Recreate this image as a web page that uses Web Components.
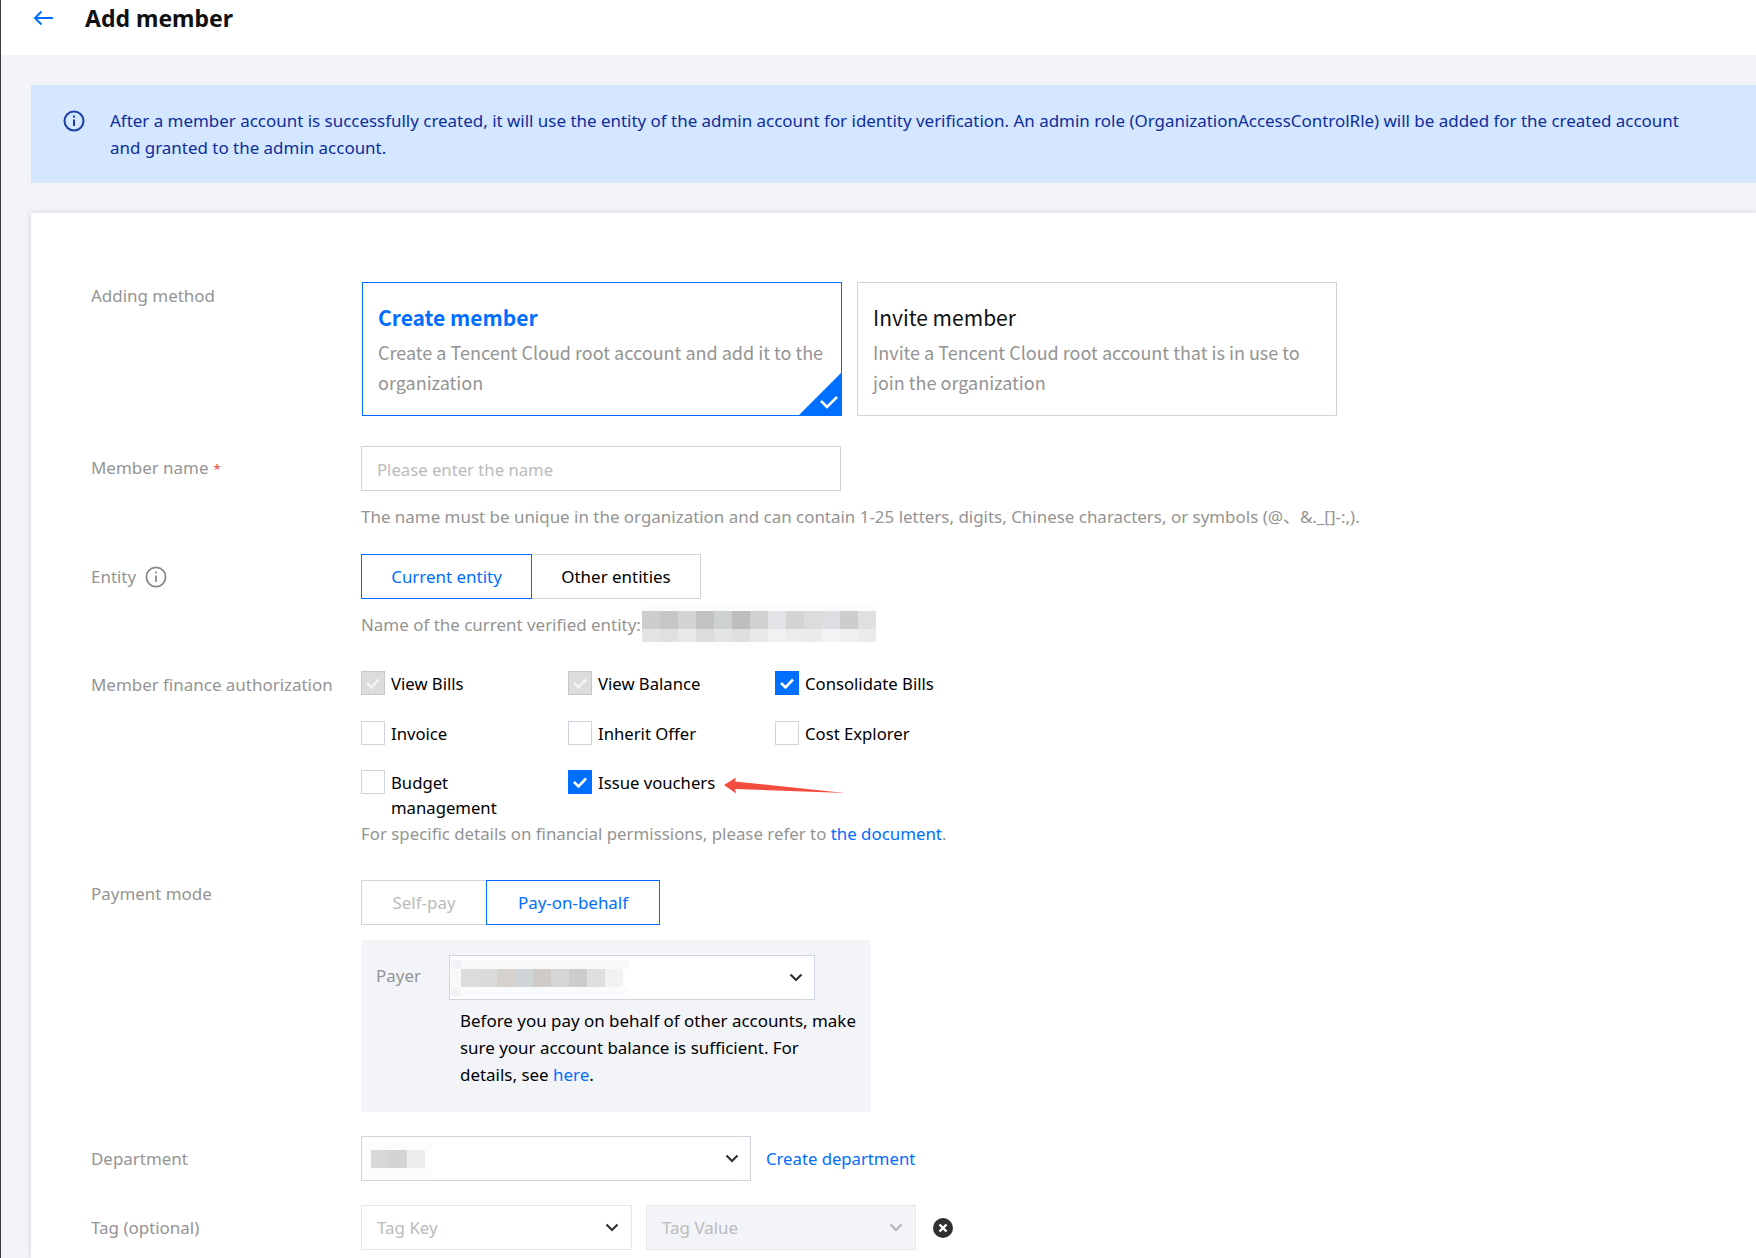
<!DOCTYPE html>
<html lang="en">
<head>
<meta charset="utf-8">
<title>Add member</title>
<style>
  html, body { margin: 0; padding: 0; }
  body {
    width: 1756px;
    height: 1258px;
    overflow: hidden;
    background: #f2f4f8;
    font-family: "Noto Sans", "Noto Sans CJK SC", sans-serif;
    font-size: 16.95px;
    color: #000;
  }
  a { color: #006eff; text-decoration: none; }
  .hint { color: #949494; line-height: 27px; white-space: nowrap; }
  .hint-name { margin-top: 12px; }
  .hint-entity { display: flex; align-items: center; margin-top: 9px; height: 32px; }
  .hint-entity mosaic-block { margin-left: 1px; }
  .hint-fin { font-size: 16.85px; }
  .checks { display: grid; grid-template-columns: repeat(3, 207px); width: 621px; row-gap: 25px; margin-top: 1px; font-size: 16.7px; }
  .checks .last { margin-top: -1px; }
  .payer-box { width: 510px; height: 172px; box-sizing: border-box; padding: 15px; margin-top: 15px; background: #f2f4f8; }
  .payer-line { display: flex; }
  .payer-line span { width: 73px; line-height: 42px; color: #949494; }
  .payer-note { width: 399px; margin: 7px 0 0 84px; line-height: 27px; }
  .inline { display: flex; align-items: center; }
  .tag-value { margin-left: 14px; }
  .tag-del { margin-left: 17px; }
  .dept-link { margin-left: 15px; font-size: 16.7px; }
  .req { margin-left: 5px; font-size: 13px; color: #e54545; }
</style>
</head>
<body>

<template id="t-page">
  <style>
    :host { display: block; position: relative; height: 1258px; border-left: 1px solid #3c3c3c; box-sizing: border-box; }
    header { display: flex; align-items: center; height: 55px; padding-bottom: 19px; box-sizing: border-box; padding-left: 32px; background: #fff; }
    h1 { margin: 0 0 0 32px; font-size: 23px; line-height: 36px; font-weight: 700; color: #111; }
    main { padding: 30px 0 0 30px; }
    .panel { margin-top: 30px; padding: 69px 0 0 60px; height: 1045px; box-sizing: border-box; background: #fff; box-shadow: 0 0 6px rgba(54, 58, 80, .16); }
    .red-arrow { position: absolute; left: 722px; top: 777px; }
  </style>
  <header>
    <svg width="20" height="16" viewBox="0 0 20 16" fill="none" stroke="#006eff" stroke-width="2"><path d="M20 8H2M8.5 1.5 2 8l6.5 6.5"/></svg>
    <h1><slot name="title"></slot></h1>
  </header>
  <main>
    <slot name="alert"></slot>
    <div class="panel"><slot></slot></div>
  </main>
  <svg class="red-arrow" width="124" height="18" viewBox="0 0 124 18"><path fill="#f44d3f" d="M1 8 13 .5 12 4.5 122 16 12 12 13 16.5Z"/></svg>
</template>

<template id="t-alert">
  <style>
    :host { display: flex; height: 98px; box-sizing: border-box; padding: 22px 52px 0 32px; background: #d5e6ff; color: #0d2e9c; line-height: 27px; }
    svg { flex: none; margin: 3px 25px 0 0; }
    div { flex: 1; }
  </style>
  <svg width="22" height="22" viewBox="0 0 22 22" fill="none" stroke="#1c3fa6" stroke-width="2"><circle cx="11" cy="11" r="9.5"/><path d="M11 9.5V16M11 5.5v2"/></svg>
  <div><slot></slot></div>
</template>

<template id="t-row">
  <style>
    :host { display: grid; grid-template-columns: 270px 1fr; }
    .label { display: flex; align-items: flex-start; color: #949494; line-height: 27px; padding-top: var(--label-top, 9px); }
    .field { min-width: 0; }
  </style>
  <div class="label"><slot name="label"></slot></div>
  <div class="field"><slot></slot></div>
</template>

<template id="t-method">
  <style>
    :host { display: block; position: relative; width: 480px; height: 134px; box-sizing: border-box; padding: 18px 15px 0; background: #fff; border: 1px solid #cfd5de; }
    :host([selected]) { border-color: #006eff; }
    .name { font-family: "Noto Sans CJK SC", "Noto Sans", sans-serif; font-size: 21px; line-height: 32px; color: #111; }
    :host([selected]) .name { color: #006eff; font-weight: 700; }
    .desc { margin-top: 4px; font-family: "Noto Sans CJK SC", "Noto Sans", sans-serif; font-size: 18px; line-height: 30px; color: #949494; }
    svg { display: none; position: absolute; right: -1px; bottom: -1px; }
    :host([selected]) svg { display: block; }
  </style>
  <div class="name"><slot name="name"></slot></div>
  <div class="desc"><slot></slot></div>
  <svg width="44" height="44" viewBox="0 0 44 44"><path fill="#006eff" d="M44 0V44H0Z"/><path fill="none" stroke="#fff" stroke-width="2.6" d="M23 29l6 6 10-10"/></svg>
</template>

<template id="t-input">
  <style>
    :host { display: block; width: 480px; height: 45px; box-sizing: border-box; padding: 0 15px; border: 1px solid #cfd5de; background: #fff; color: #bbb; font-size: 16.7px; line-height: 45px; }
  </style>
  <slot></slot>
</template>

<template id="t-seg-group">
  <style>:host { display: flex; }</style>
  <slot></slot>
</template>

<template id="t-seg">
  <style>
    :host { display: block; position: relative; height: 45px; box-sizing: border-box; margin-right: -1px; border: 1px solid #cfd5de; background: #fff; text-align: center; line-height: 44px; color: #000; }
    :host([selected]) { z-index: 1; border-color: #006eff; color: #006eff; }
    :host([disabled]) { color: #bbb; }
  </style>
  <slot></slot>
</template>

<template id="t-check">
  <style>
    :host { display: flex; align-items: flex-start; line-height: 25px; }
    .box { flex: none; width: 24px; height: 24px; box-sizing: border-box; margin-right: 6px; background: #fff; border: 1px solid #cfd5de; }
    .box svg { display: none; }
    :host([checked]) .box { background: #006eff; border-color: #006eff; }
    :host([checked]) .box svg, :host([locked]) .box svg { display: block; }
    :host([locked]) .box { background: #dcdcdc; border-color: #c8c8c8; }
    :host([locked]) path { stroke: #f4f4f4; }
    .txt { max-width: 140px; }
  </style>
  <div class="box"><svg width="22" height="22" viewBox="0 0 22 22" fill="none"><path stroke="#fff" stroke-width="2.6" d="M5 11l4.5 4.5L17 7.5"/></svg></div>
  <div class="txt"><slot></slot></div>
</template>

<template id="t-select">
  <style>
    :host { display: flex; align-items: center; height: 45px; box-sizing: border-box; padding: 0 11px 0 15px; background: #fff; border: 1px solid #cfd5de; color: #bbb; }
    :host([soft]) { padding-right: 12px; border-color: #e4e7ed; }
    :host([disabled]) { padding-right: 12px; background: #f2f4f8; border-color: #e4e7ed; }
    .txt { flex: 1; min-width: 0; line-height: 0; }
    .txt span { line-height: 27px; }
    path { stroke: #333; }
    :host([disabled]) path { stroke: #b4b4b4; }
  </style>
  <div class="txt"><span><slot></slot></span></div>
  <svg width="14" height="10" viewBox="0 0 14 10" fill="none"><path stroke-width="2.2" d="M1.5 1.5 7 7l5.5-5.5"/></svg>
</template>

<template id="t-info">
  <style>:host { display: inline-flex; margin: 3px 0 0 9px; }</style>
  <svg width="22" height="22" viewBox="0 0 22 22" fill="none" stroke="#8a8a8a" stroke-width="1.8"><circle cx="11" cy="11" r="9.6"/><path d="M11 9.5V16M11 5.5v2"/></svg>
</template>

<template id="t-del">
  <style>:host { display: inline-flex; }</style>
  <svg width="20" height="20" viewBox="0 0 20 20"><circle cx="10" cy="10" r="10" fill="#2f2f2f"/><path stroke="#fff" stroke-width="2.4" d="M6.5 6.5l7 7M13.5 6.5l-7 7"/></svg>
</template>

<template id="t-mosaic">
  <style>
    :host { display: inline-block; line-height: 0; vertical-align: top; }
    .r { display: flex; }
    .r div { flex: none; }
  </style>
  <div id="out"></div>
</template>

<script>
  // every element is the same thing: clone its template into an open shadow root
  function plain(name, tpl) {
    customElements.define(name, class extends HTMLElement {
      constructor() {
        super();
        const root = this.attachShadow({ mode: "open" });
        root.appendChild(document.getElementById(tpl).content.cloneNode(true));
      }
    });
  }

  plain("member-page", "t-page");
  plain("alert-banner", "t-alert");
  plain("form-row", "t-row");
  plain("method-card", "t-method");
  plain("text-input", "t-input");
  plain("seg-group", "t-seg-group");
  plain("seg-button", "t-seg");
  plain("check-item", "t-check");
  plain("select-box", "t-select");
  plain("info-icon", "t-info");
  plain("delete-icon", "t-del");

  // rows="height:width*color width*color;..." draws the blurred-out blocks
  class MosaicBlock extends HTMLElement {
    constructor() {
      super();
      const root = this.attachShadow({ mode: "open" });
      root.appendChild(document.getElementById("t-mosaic").content.cloneNode(true));
    }

    connectedCallback() {
      const out = this.shadowRoot.getElementById("out");
      this.getAttribute("rows").split(";").forEach(function (row) {
        const parts = row.trim().split(":");
        const r = document.createElement("div");
        r.className = "r";
        parts[1].trim().split(/\s+/).forEach(function (cell) {
          const c = cell.split("*");
          const d = document.createElement("div");
          d.style.cssText = "width:" + c[0] + "px;height:" + parts[0] + "px;background:" + c[1];
          r.appendChild(d);
        });
        out.appendChild(r);
      });
    }
  }
  customElements.define("mosaic-block", MosaicBlock);
</script>

<member-page>
  <span slot="title">Add member</span>
  <alert-banner slot="alert">After a member account is successfully created, it will use the entity of the admin account for identity verification. An admin role (OrganizationAccessControlRle) will be added for the created account and granted to the admin account.</alert-banner>

  <form-row style="--label-top:0px">
    <span slot="label">Adding method</span>
    <div style="display:flex;gap:15px;margin-left:1px">
      <method-card selected><span slot="name">Create member</span>Create a Tencent Cloud root account and add it to the organization</method-card>
      <method-card><span slot="name">Invite member</span>Invite a Tencent Cloud root account that is in use to join the organization</method-card>
    </div>
  </form-row>

  <form-row style="margin-top:30px;--label-top:8px">
    <span slot="label">Member name<span class="req">*</span></span>
    <text-input>Please enter the name</text-input>
    <div class="hint hint-name">The name must be unique in the organization and can contain 1-25 letters, digits, Chinese characters, or symbols (@、&amp;._[]-:,).</div>
  </form-row>

  <form-row style="margin-top:24px">
    <span slot="label" style="display:inline-flex">Entity<info-icon></info-icon></span>
    <seg-group>
      <seg-button selected style="width:171px">Current entity</seg-button>
      <seg-button style="width:170px">Other entities</seg-button>
    </seg-group>
    <div class="hint hint-entity">Name of the current verified entity:<mosaic-block rows="5:234*#fcfcfc;18:18*#cdcdcd 18*#c6c6c4 18*#d2d5d4 18*#c3c3c1 18*#cdd1d1 18*#bebebe 18*#d2d1cf 18*#e1e3e6 18*#d4d4d4 18*#dddcda 18*#dcdee1 18*#cdcdcd 18*#dee0e2;13:18*#e3e3e1 18*#e0e0e0 18*#e8e8e8 18*#dcdcda 18*#e4e4e4 18*#dfdfdf 18*#e9e9e9 18*#f0f1f1 18*#ececec 18*#ecebea 18*#f2f3f3 18*#efefef 18*#ebebeb"></mosaic-block></div>
  </form-row>

  <form-row style="margin-top:30px;--label-top:1px">
    <span slot="label">Member finance authorization</span>
    <div class="checks">
      <check-item locked>View Bills</check-item>
      <check-item locked>View Balance</check-item>
      <check-item checked>Consolidate Bills</check-item>
      <check-item>Invoice</check-item>
      <check-item>Inherit Offer</check-item>
      <check-item>Cost Explorer</check-item>
      <check-item class="last">Budget management</check-item>
      <check-item class="last" checked>Issue vouchers</check-item>
    </div>
    <div class="hint hint-fin">For specific details on financial permissions, please refer to <a href="#">the document</a>.</div>
  </form-row>

  <form-row style="margin-top:33px;--label-top:0px">
    <span slot="label">Payment mode</span>
    <seg-group>
      <seg-button disabled style="width:126px">Self-pay</seg-button>
      <seg-button selected style="width:174px">Pay-on-behalf</seg-button>
    </seg-group>
    <div class="payer-box">
      <div class="payer-line">
        <span>Payer</span>
        <select-box style="width:366px;padding-left:1px"><mosaic-block rows="9:10*#f1f3f6 168*#f9f9f9;18:10*#f8f9fb 18*#dcdcda 18*#d9dbd9 18*#d5d1cd 18*#cfd4d7 18*#cdcac7 18*#d6d6d5 18*#cbcccd 18*#dfdfdf 18*#f2f2f2;9:10*#f2f3f5 168*#fafbfc"></mosaic-block></select-box>
      </div>
      <div class="payer-note">Before you pay on behalf of other accounts, make sure your account balance is sufficient. For details, see <a href="#">here</a>.</div>
    </div>
  </form-row>

  <form-row style="margin-top:24px">
    <span slot="label">Department</span>
    <div class="inline">
      <select-box style="width:390px;padding-left:6px"><mosaic-block rows="9:64*#fcfcfc;18:3*#fcfcfc 18*#dad8d6 18*#d3d4d6 18*#eceeed 7*#fcfcfc;9:64*#fcfcfc"></mosaic-block></select-box>
      <a class="dept-link" href="#">Create department</a>
    </div>
  </form-row>

  <form-row style="margin-top:24px">
    <span slot="label">Tag (optional)</span>
    <div class="inline">
      <select-box soft style="width:271px">Tag Key</select-box>
      <select-box class="tag-value" disabled style="width:270px">Tag Value</select-box>
      <delete-icon class="tag-del"></delete-icon>
    </div>
  </form-row>
</member-page>

</body>
</html>
